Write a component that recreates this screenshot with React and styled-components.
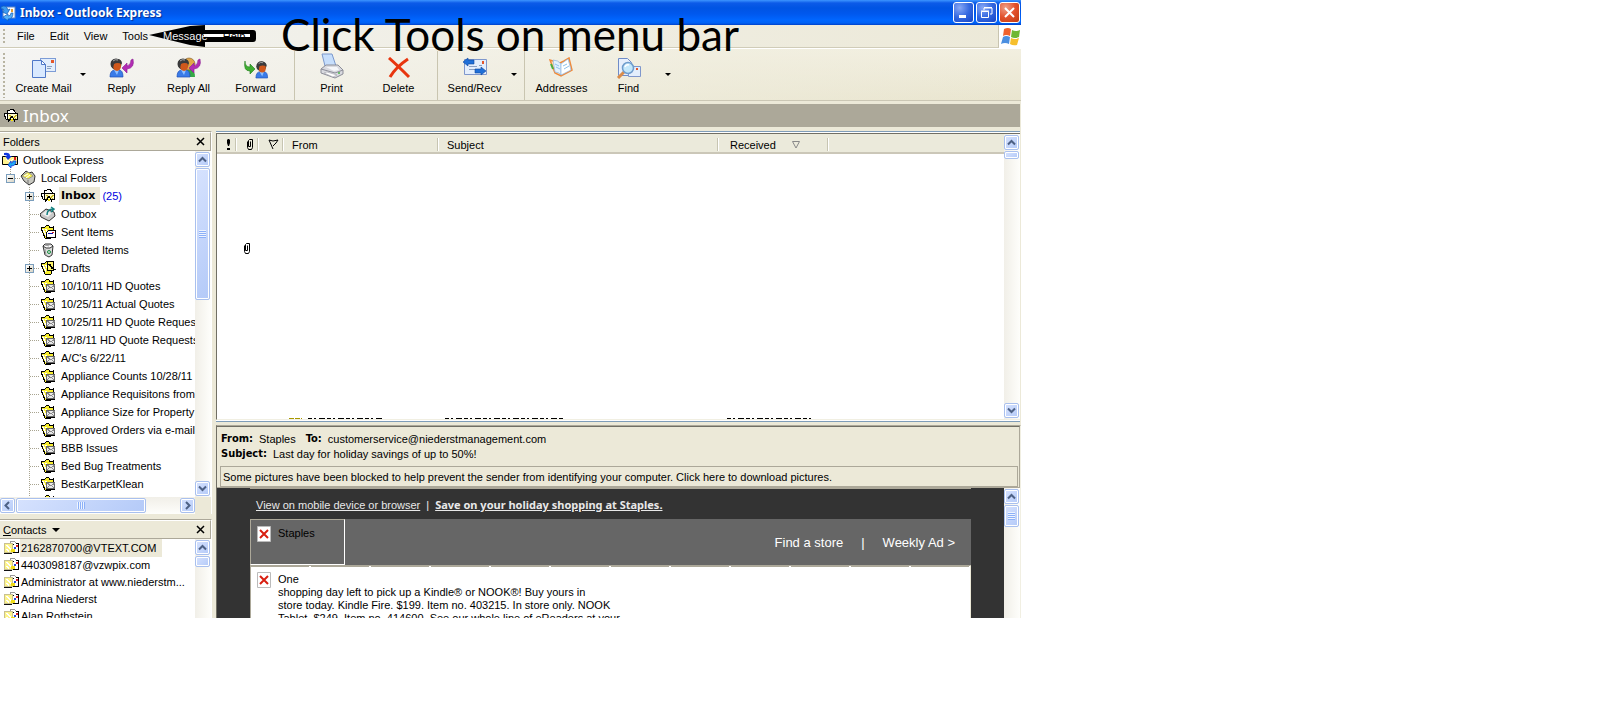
import React from 'react';
import styled, { createGlobalStyle, css } from 'styled-components';

const face = '#ece9d8';
const shade = '#aca899';
const ui = '"Liberation Sans", sans-serif';

const GlobalStyle = createGlobalStyle`
  * { box-sizing: border-box; }
  body { margin: 0; background: #fff; font: 11px/14px ${ui}; color: #000; }
  button { font: inherit; color: inherit; border: 0; padding: 0; margin: 0; background: none; white-space: nowrap; }
  svg { display: block; flex: none; }
  ul { list-style: none; margin: 0; padding: 0; }
`;

const Desktop = styled.div`height: 100vh; padding-bottom: 95px; overflow: hidden;`;
const Window = styled.main`
  position: relative;
  width: calc(100% - 579px);
  height: 100%;
  display: flex;
  flex-direction: column;
  overflow: hidden;
  background: ${face};
`;

/* Title bar */
const TitleBar = styled.header`
  display: flex;
  align-items: center;
  flex: none;
  height: 25px;
  padding-right: 1px;
  background: linear-gradient(#3d95ff 0, #0c5be8 3px, #0054e3 8px, #0058ee 14px, #0066ff 20px, #0062f5 23px, #0040c8 25px);
`;
const Title = styled.h1`
  flex: 1;
  margin: 0 0 0 4px;
  color: #fff;
  font: bold 12px/20px "Noto Sans", sans-serif;
  text-shadow: 1px 1px 1px #0a2f8f;
`;
const CaptionButtons = styled.div`display: flex; gap: 2px;`;
const CaptionButton = styled.button`
  display: grid;
  place-items: center;
  width: 21px;
  height: 21px;
  border: 1px solid #fff;
  border-radius: 3px;
  background: ${p => p.$close
    ? 'radial-gradient(circle at 30% 25%, #f0a088, #e2512c 50%, #c03a10)'
    : 'radial-gradient(circle at 30% 25%, #88a8f5, #3468e0 50%, #1644c4)'};
`;

/* Menu bar */
const MenuBar = styled.nav`
  display: flex;
  align-items: stretch;
  flex: none;
  height: 24px;
  background: linear-gradient(90deg, #f3f3f1, #efede1 60%, ${face});
  border-bottom: 1px solid #fff;
`;
const MenuItems = styled.div`
  flex: 1;
  display: flex;
  align-items: center;
  padding-left: 3px;
  border-bottom: 1px solid #d0ccb8;
  border-right: 1px solid #c8c4b0;
`;
const Grip = styled.span`
  width: 2px;
  align-self: stretch;
  margin: ${p => p.$tall ? '4px 0 2px' : '4px 0'};
  background: repeating-linear-gradient(#b8b4a2 0 2px, transparent 2px 4px);
`;
const MenuList = styled.div`display: flex; gap: 15px; margin-left: 12px;`;
const MenuItem = styled.button`
  position: relative;
  z-index: 2;
  color: ${p => p.$light ? '#f4f4f4' : '#000'};
  line-height: 14px;
`;
const Flag = styled.div`
  width: 22px;
  display: grid;
  place-items: center;
  background: #fff;
`;

/* Tool bar */
const ToolBar = styled.div`
  display: flex;
  align-items: stretch;
  flex: none;
  height: 52px;
  padding-left: 3px;
  background: linear-gradient(90deg, rgba(245,245,245,.9), rgba(240,238,224,.5) 70%, transparent), linear-gradient(#f2efe0, #e9e5cf);
  border-bottom: 1px solid #cbc7b5;
`;
const ToolButton = styled.button`
  width: 67px;
  display: flex;
  flex-direction: column;
  align-items: center;
  gap: 2px;
  padding-top: 8px;
  line-height: 14px;
`;
const DropButton = styled.button`
  width: 11px;
  display: grid;
  place-items: center;
`;
const Caret = styled.span`
  border: ${p => p.$big ? 4 : 3}px solid transparent;
  border-top-color: #000;
  border-bottom: 0;
`;
const Rule = styled.span`width: 1px; margin: 2px 3px 0 5px; background: #c9c5b0;`;
const ToolSpace = styled.span`width: 5px;`;

const ViewBar = styled.div`
  display: flex;
  align-items: center;
  gap: 4px;
  flex: none;
  height: 23px;
  margin: 3px 1px 4px 0;
  padding-left: 3px;
  background: ${shade};
`;
const ViewTitle = styled.h2`
  margin: 0;
  color: #fff;
  font: 17px/22px "Noto Sans", sans-serif;
`;

/* Panes */
const Panes = styled.div`flex: 1; min-height: 0; display: flex; gap: 4px;`;
const Side = styled.aside`width: 212px; flex: none; display: flex; flex-direction: column; gap: 5px;`;
const Panel = styled.section`
  display: flex;
  flex-direction: column;
  min-height: 0;
  border-top: 1px solid ${shade};
  border-right: 1px solid #fff;
  ${p => p.$grow ? css`flex: 1;` : css`flex: 0 0 99px;`}
`;
const PanelHead = styled.div`
  display: flex;
  align-items: center;
  justify-content: space-between;
  flex: none;
  height: 19px;
  padding: 0 5px 0 3px;
  border-top: 1px solid #fff;
  border-bottom: 1px solid ${shade};
  border-right: 1px solid ${shade};
`;
const PanelTitle = styled.h3`margin: 0; font: inherit; display: flex; align-items: center; gap: 6px;`;
const PanelBody = styled.div`flex: 1; min-height: 0; display: flex; overflow: hidden; background: #fff;`;
const Clip = styled.div`flex: 1; min-width: 0; overflow: hidden;`;

const Row = styled.li`
  display: flex;
  align-items: center;
  height: 18px;
  padding-left: ${p => p.$depth ? (p.$depth === 1 ? 0 : 20) : 2}px;
  white-space: nowrap;
`;
const Branch = styled.span`
  display: grid;
  place-items: center start;
  width: 20px;
  height: 18px;
  > * { grid-area: 1 / 1; }
`;
const Expander = styled.button`
  display: grid;
  place-items: center;
  width: 9px;
  height: 9px;
  margin-left: ${p => p.$root ? 6 : 5}px;
  border: 1px solid #7b9ebd;
  background: linear-gradient(135deg, #fff, #d8d4c4);
`;
const RowLabel = styled.span`
  margin-left: 3px;
  padding: 2px ${p => p.$selected ? 5 : 2}px 2px 2px;
  ${p => p.$selected && css`background: ${face}; font: bold 11px/14px "DejaVu Sans", sans-serif;`}
`;
const Unread = styled.span`color: #0000e0; margin-left: 2px;`;

const Contact = styled.li`
  display: flex;
  align-items: center;
  height: 17px;
  padding-left: 4px;
  white-space: nowrap;
`;
const ContactName = styled.span`
  padding: 2px ${p => p.$selected ? 6 : 0}px 2px 1px;
  background: ${p => p.$selected ? face : 'none'};
`;

/* Scroll bars */
const ScrollTrack = styled.div`
  display: flex;
  flex: none;
  background: linear-gradient(${p => p.$flat ? '180deg' : '90deg'}, #f1efe8, #fefefb);
  ${p => p.$flat
    ? css`height: 17px; margin-right: 16px; padding: 1px 0;`
    : css`width: 16px; flex-direction: column; padding: 1px 1px 1px 0;`}
`;
const scrollFace = css`
  display: grid;
  place-items: center;
  flex: none;
  border: 1px solid #fff;
  border-radius: 2px;
  outline: 1px solid #a9c0ee;
  outline-offset: -1px;
  box-shadow: inset 0 0 0 1px #fff;
  background: linear-gradient(135deg, #d6e2fe, #b4caf8);
`;
const ScrollButton = styled.button`
  ${scrollFace}
  width: 15px;
  height: 15px;
`;
const ScrollThumb = styled.div`
  ${scrollFace}
  ${p => p.$flat ? css`width: ${p.$size}px; margin-left: 1px;` : css`height: ${p.$size}px; margin-top: 1px;`}
`;
const Ridges = styled.span`
  width: ${p => p.$flat ? 8 : 7}px;
  height: ${p => p.$flat ? 7 : 8}px;
  background: repeating-linear-gradient(${p => p.$flat ? '90deg' : '180deg'}, #eef4fe 0 1px, #8cb0f8 1px 2px);
`;
const Fill = styled.span`flex: 1;`;

/* Message list */
const Main = styled.div`flex: 1; min-width: 0; display: flex; flex-direction: column; gap: 3px;`;
const ListPane = styled.section`
  flex: 1;
  min-height: 0;
  display: flex;
  overflow: hidden;
  margin-right: 1px;
  border-top: 1px solid #7f9db9;
  border-bottom: 1px solid #7f9db9;
  background: #fff;
`;
const ListFrame = styled.div`
  flex: 1;
  display: flex;
  margin: 1px 0;
  border-top: 1px solid #716f64;
  border-left: 1px solid #716f64;
  border-bottom: 1px solid #f1efe2;
`;
const TableWrap = styled.div`
  flex: 1;
  display: flex;
  flex-direction: column;
  justify-content: space-between;
  overflow: hidden;
`;
const MailTable = styled.table`
  width: 100%;
  table-layout: fixed;
  border-collapse: collapse;
`;
const HeadCell = styled.th`
  width: ${p => p.$w ? p.$w + 'px' : 'auto'};
  height: 20px;
  padding: 1px 0 0 ${p => p.$pad || 0}px;
  box-shadow: inset 0 -2px #cbc7b8;
  background:
    linear-gradient(#fff, #fff) right 0 center / 1px 13px no-repeat,
    linear-gradient(#c7c5b2, #c7c5b2) right 1px center / 1px 13px no-repeat,
    #ebeadb;
  ${p => !p.$w && css`background: #ebeadb;`}
  font-weight: 400;
  text-align: left;
`;
const SortLabel = styled.span`display: flex; align-items: center; gap: 16px;`;
const Cell = styled.td`height: 188px; padding: 0 0 0 6px;`;

/* Preview */
const Preview = styled.section`
  flex: 0 0 193px;
  display: flex;
  flex-direction: column;
  overflow: hidden;
  border-top: 1px solid ${shade};
  border-left: 1px solid #716f64;
  border-right: 1px solid #f1efe2;
`;
const MailHead = styled.div`
  flex: none;
  padding: 5px 1px 0 3px;
  border-top: 1px solid #716f64;
  border-right: 1px solid ${shade};
  border-bottom: 1px solid ${shade};
  height: 62px;
`;
const HeadLine = styled.div`display: flex; gap: 6px; height: 15px; line-height: 14px; padding-left: 1px;`;
const Name = styled.b`font: bold 11px/14px "DejaVu Sans Condensed", sans-serif;`;
const Value = styled.span`margin-right: 4px;`;
const InfoBar = styled.button`
  display: block;
  width: 100%;
  height: 21px;
  margin-top: 4px;
  padding-left: 2px;
  border: 1px solid ${shade};
  text-align: left;
`;
const MailBody = styled.div`flex: 1; min-height: 0; display: flex;`;
const Canvas = styled.div`
  flex: 1;
  min-width: 0;
  overflow: hidden;
  padding: 0 33px;
  background: #333;
`;
const TopLinks = styled.p`
  margin: 0;
  height: 31px;
  padding: 9px 0 0 6px;
  border-top: 1px solid ${shade};
  color: #e8e8e8;
  white-space: nowrap;
`;
const TopLink = styled.a`
  color: inherit;
  ${p => p.$strong && css`font-family: "Noto Sans", sans-serif; font-weight: 700;`}
`;
const Bar = styled.span`margin: 0 6px;`;
const Banner = styled.div`
  display: flex;
  justify-content: space-between;
  height: 46px;
  background: #666;
`;
const Logo = styled.div`
  display: flex;
  gap: 7px;
  width: 95px;
  padding: 6px;
  border: 1px solid ${shade};
  border-right-color: #fff;
  border-bottom-color: #fff;
`;
const BannerNav = styled.nav`
  display: flex;
  align-items: center;
  gap: 18px;
  padding: 1px 16px 0 0;
  color: #fff;
  font-size: 13px;
`;
const BannerLink = styled.a`color: inherit; text-decoration: none;`;
const Offer = styled.article`
  display: flex;
  gap: 7px;
  height: 90px;
  padding: 6px 6px;
  border-left: 1px solid ${shade};
  border-right: 1px solid ${face};
  border-top: 1px solid ${shade};
  background: repeating-linear-gradient(90deg, ${shade} 0 58px, #fff 58px 60px) top / 100% 1px no-repeat, #fff;
`;
const OfferText = styled.p`margin: 1px 0 0; line-height: 13px; white-space: nowrap;`;

/* Annotation */
const Note = styled.div`
  position: absolute;
  z-index: 3;
  left: 281px;
  top: 8px;
  font: 44px/52px Lato, sans-serif;
  white-space: nowrap;
  pointer-events: none;
`;
const ArrowMark = styled.svg`
  position: absolute;
  z-index: 1;
  left: 148px;
  top: 24px;
  pointer-events: none;
`;

/* Icons */
const AppIcon = () => (
  <svg width="16" height="18" viewBox="0 0 16 18">
    <rect x="3" y="3" width="12" height="11" fill="#fff" stroke="#5d86c8" />
    <path d="M11 5h2v3h-2z" fill="#e59d30" />
    <path d="M1 3q5-3 7 3l2-1-3 5-5-2 2-1Q4 4 1 5z" fill="#3d9bf0" stroke="#125cb8" strokeWidth=".7" />
    <path d="M13 9q0 6-5 6v2l-5-4 5-3v2q3 0 3-3z" fill="#55b1fa" stroke="#125cb8" strokeWidth=".7" />
  </svg>
);
const WindowsFlag = () => (
  <svg width="19" height="19" viewBox="0 0 19 19">
    <path d="M3 2q4-2 7 0L9 9q-4-2-7 0z" fill="#f0622c" />
    <path d="M11 3q4 2 8 0l-1 7q-4 2-8 0z" fill="#6fb834" />
    <path d="M2 10q3-2 7 0l-1 7q-4-2-8 0z" fill="#4b8fe0" />
    <path d="M10 11q4 2 8 0l-2 7q-4 1-7-1z" fill="#f6bf2c" />
  </svg>
);
const CreateIcon = () => (
  <svg width="26" height="22" viewBox="0 0 26 22">
    <rect x="9.500" y="1.500" width="15" height="13" fill="#e3eefc" stroke="#7d9cd6" />
    <path d="M20 3h3v3h-3z" fill="#e4572a" /><path d="M16 9.500h5M16 11.500h4" stroke="#8aa0c0" />
    <path d="M1.500 3.500h9l4 4v13h-13z" fill="#d9e9ff" stroke="#4f78c8" />
    <path d="M10.500 3.500v4h4z" fill="#fff" stroke="#4f78c8" />
  </svg>
);
const Person = () => (
  <g>
    <path d="M1 20q0-7 5-7h4q4 0 4 7z" fill="#3a7be8" stroke="#1c4fb8" strokeWidth=".7" />
    <path d="M5 13l3 5 2-5z" fill="#8fc0ff" />
    <circle cx="7" cy="7" r="5.500" fill="#333" />
    <ellipse cx="8" cy="9" rx="4" ry="5" fill="#d0581c" />
    <path d="M2 9q0-8 6-7 5 0 5 5-5-2-8 0l-1 4z" fill="#3b3b3d" />
    <path d="M4 4q2-2 5-1" stroke="#a8a8a8" fill="none" />
  </g>
);
const Swoop = () => <path d="M24 2q2 9-6 10v4l-5-5 5-5v3q4-1 4-6z" fill="#b22cb4" stroke="#8a1c90" strokeWidth=".6" />;
const ReplyIcon = () => <svg width="26" height="22" viewBox="0 0 26 22"><Person /><Swoop /></svg>;
const ReplyAllIcon = () => (
  <svg width="26" height="22" viewBox="0 0 26 22">
    <path d="M9 20q0-8 5-8 5 1 5 8z" fill="#35a845" /><circle cx="13" cy="7" r="6" fill="#e0a548" stroke="#7a5520" strokeWidth=".6" />
    <Person /><Swoop />
  </svg>
);
const ForwardIcon = () => (
  <svg width="26" height="22" viewBox="0 0 26 22">
    <path d="M2 4q0 6 5 6V7l5 5-5 5v-3Q0 14 2 4z" fill="#3fae32" stroke="#1d7a18" strokeWidth=".6" />
    <g transform="translate(12 3) scale(.9)"><Person /></g>
  </svg>
);
const PrintIcon = () => (
  <svg width="26" height="22" viewBox="0 2 26 22" overflow="visible">
    <path d="M3 -1h10l4 12H6z" fill="#c6defc" stroke="#7b98cc" />
    <path d="M2 14l5-4h12l5 5v4l-8 4-14-5z" fill="#d9dae0" stroke="#8c8d98" />
    <path d="M2 14l14 4 8-3" fill="none" stroke="#8c8d98" /><path d="M7 12h11l2 3-5 1z" fill="#f6f7fa" />
    <path d="M5 18l9 4 4-2-10-3z" fill="#fff" stroke="#a0a0a8" strokeWidth=".6" /><circle cx="20" cy="18" r="1" fill="#4bb34b" />
  </svg>
);
const DeleteIcon = () => (
  <svg width="26" height="22" viewBox="0 0 26 22">
    <path d="M3 1q9 8 20 19M22 2Q10 10 4 20" fill="none" stroke="#e8350e" strokeWidth="3" />
  </svg>
);
const SendIcon = () => (
  <svg width="26" height="22" viewBox="0 0 26 22">
    <path d="M2.500 2.500h22v15h-22z" fill="#e4eefc" stroke="#7f97cc" />
    <path d="M20 4h2v3h-2z" fill="#e4572a" /><path d="M7 9.500h8M7 12.500h6M17 8.500h3" stroke="#8ba0c4" />
    <path d="M1 5l5-4v2h6v4H6v2z" fill="#1f6fd8" stroke="#0d469e" strokeWidth=".6" />
    <path d="M24 14l-5-4v2h-6v4h6v2z" fill="#1f6fd8" stroke="#0d469e" strokeWidth=".6" />
  </svg>
);
const AddressIcon = () => (
  <svg width="26" height="22" viewBox="0 0 26 22">
    <path d="M1 3l5 13 6 3 11-6-3-12-5 3-4 2z" fill="#fbe1b8" stroke="#ef8a3c" strokeWidth="1.500" />
    <path d="M4 3q5 0 8 4v11q-2-3-6-3z" fill="#e3f1fd" stroke="#8db4e0" strokeWidth=".7" />
    <path d="M12 7l7-5 3 11-10 5z" fill="#fff" stroke="#8db4e0" strokeWidth=".7" />
    <path d="M6 7l4 2M7 10l4 2M14 9l4-2M15 12l5-3" stroke="#8cc0ea" /><path d="M2 7l2 5" stroke="#4bae3e" strokeWidth="2" />
  </svg>
);
const FindIcon = () => (
  <svg width="26" height="22" viewBox="0 0 26 22">
    <path d="M2.500 1.500h9l4 4v13h-13z" fill="#e6effc" stroke="#6f8cc8" />
    <path d="M12.500 9.500h12v10h-12z" fill="#e3eefc" stroke="#7f97cc" /><path d="M20 11h2v2h-2z" fill="#e4572a" />
    <path d="M8 15l-6 6" stroke="#d98c4a" strokeWidth="3" />
    <circle cx="12" cy="11" r="5.500" fill="#c4e8fb" stroke="#6f9ccc" strokeWidth="1.500" />
    <path d="M9 10q1-3 4-2" stroke="#fff" fill="none" strokeWidth="1.500" />
  </svg>
);
const InboxIcon = () => (
  <svg width="16" height="16" viewBox="0 0 16 16" shapeRendering="crispEdges">
    <path d="M1 6l3-1V2h3l3-1 2 3v2H5l1 6-3-1z" fill="#fff" stroke="#000" />
    <path d="M4.500 5.500h10v6h-10z" fill="#fffbc8" stroke="#000" />
    <path d="M6 7l4 3 4-3M6 11l2-2M13 11l-2-2" fill="none" stroke="#c8b820" />
    <path d="M5 14l4-6 3 6" fill="none" stroke="#000" /><path d="M8 11h2v2H8z" fill="#f4e400" />
  </svg>
);
const FolderIcon = ({ kind }) => (
  <svg width="16" height="16" viewBox="0 0 16 16" shapeRendering="crispEdges">
    <path d="M1 4l4-1 2-2 2 1 1 2 3-1v3l-2 8H5z" fill="#f8ee30" stroke="#000" />
    <path d="M2 5h1v2h1v2h1v2h1M5 5h1v2h1v1" stroke="#fff" fill="none" />
    {kind === 'drafts'
      ? <><path d="M7.500 1.500h6v9h-6z" fill="#fff36a" stroke="#000" /><path d="M9 4l4 5" stroke="#000" strokeWidth="2" /><path d="M14 9h2" stroke="#000" /></>
      : kind === 'sent'
        ? <><path d="M6 9l3-3h6v7H6z" fill="#fff" stroke="#000" /><path d="M8 9.500h5" stroke="#1212b0" /><path d="M12 8h2" stroke="#e02020" /></>
        : <><path d="M6.500 6.500h8v6h-8z" fill="#e8e8e8" stroke="#666" /><path d="M7 7l4 3 4-3M7 12l2-2M14 12l-2-2" fill="none" stroke="#888" /><path d="M6 13.500h9" stroke="#000" /></>}
  </svg>
);
const OutboxIcon = () => (
  <svg width="16" height="16" viewBox="0 0 16 16">
    <path d="M0 8l6-5 8 3 1 4-6 5-8-4z" fill="#c9c9c9" stroke="#333" /><path d="M2 8l4-3 6 2-4 4z" fill="#eee" />
    <path d="M7 9q0-6 6-6M11 1l3 2-3 3" fill="none" stroke="#138080" strokeWidth="1.500" />
  </svg>
);
const TrashIcon = () => (
  <svg width="16" height="16" viewBox="0 0 16 16">
    <path d="M3 4l2-2h6l2 2-1 9-3 2-4-2z" fill="#ddd" stroke="#333" /><path d="M3 4l3 2h4l3-2" fill="#fff" stroke="#333" />
    <path d="M5 7l1 7M5 3l4 1" stroke="#999" /><circle cx="9" cy="10" r="1.500" fill="none" stroke="#159040" />
  </svg>
);
const RootIcon = () => (
  <svg width="16" height="16" viewBox="0 0 16 16">
    <path d="M.5 4.500h15v8H.5z" fill="#fff490" stroke="#000" /><path d="M12 5h2v3h-2z" fill="#e02020" /><path d="M4 7l4 3 3-3" stroke="#fff" fill="none" />
    <path d="M2 1q6-1 6 3l2 0-4 4-3-4h2Q5 3 2 3z" fill="#1238e0" />
    <path d="M14 9q0 5-5 5v2l-3-3 3-4v2q2 0 2-2z" fill="#20a8f0" stroke="#1238e0" strokeWidth=".8" />
  </svg>
);
const LocalIcon = () => (
  <svg width="16" height="16" viewBox="0 0 16 16">
    <path d="M1 6l3-3 2-2 3 2 3-1 3 4-1 6-5 3-5-4z" fill="#c8c8c0" stroke="#333" />
    <path d="M2 6l6-4 5 4-5 3z" fill="#f5ee50" stroke="#777" strokeWidth=".6" /><path d="M4 6l4-2M6 8l4-3" stroke="#fff" /><path d="M8 10v4" stroke="#777" />
  </svg>
);
const CardIcon = () => (
  <svg width="16" height="15" viewBox="0 0 16 15" shapeRendering="crispEdges">
    <path d="M6 4V2l2-1h2l3 3" fill="#fff" stroke="#999" />
    <path d="M.5 3.500h8v9h-8z" fill="#fdf48a" stroke="#c8c090" /><path d="M2 5h1v1h1v1h1v1h1v1h1M2 9h1v1h1v1h1" stroke="#fff" fill="none" />
    <path d="M0 13h8" stroke="#111" /><path d="M9 4h5v8H9z" fill="#fff" /><path d="M9 4.500h1M12 3.500h2.500v9H9.500V9" fill="none" stroke="#000" />
    <path d="M7 9h4v3H7z" fill="#f0dc18" /><path d="M10 7h2v2h-2z" fill="#2448d8" /><path d="M12 5h2v2h-2z" fill="#e02020" />
  </svg>
);
const ClipIcon = () => (
  <svg width="8" height="13" viewBox="0 0 8 13">
    <path d="M1.500 3.500v6l1 2h3l1-2v-8h-3l-1 1v6h2v-5" fill="none" stroke="#000" />
  </svg>
);
const Chevron = ({ to }) => (
  <svg width="9" height="9" viewBox="0 0 9 9">
    <path d={{ up: 'M1 6.500l3.500-3.500L8 6.500', down: 'M1 2.500L4.500 6 8 2.500', left: 'M6 1L2.500 4.500 6 8', right: 'M3 1l3.500 3.500L3 8' }[to]} fill="none" stroke="#4d6185" strokeWidth="2" />
  </svg>
);
const CrossIcon = () => <svg width="9" height="9" viewBox="0 0 9 9"><path d="M1 1l7 7M8 1L1 8" stroke="#000" strokeWidth="1.500" /></svg>;
const BrokenImage = () => (
  <svg width="14" height="16" viewBox="0 0 14 16">
    <path d="M.5.5h13v15H.5z" fill="#fff" stroke="#bbb" /><path d="M3 4l8 8M11 4l-8 8" stroke="#d81e10" strokeWidth="2" />
  </svg>
);
const Connector = ({ root }) => (
  <svg width="20" height="18">
    <path d={root ? 'M10.500 0v9M11 9.500h9' : 'M9.500 0v18M10 9.500h10'} stroke="#a8a490" strokeDasharray="1 1" />
  </svg>
);

const folders = [
  ['Inbox', 'inbox', '+'], ['Outbox', 'outbox'], ['Sent Items', 'sent'], ['Deleted Items', 'trash'], ['Drafts', 'drafts', '+'],
  ['10/10/11 HD Quotes'], ['10/25/11 Actual Quotes'], ['10/25/11 HD Quote Requests'], ['12/8/11 HD Quote Requests'],
  ["A/C's 6/22/11"], ['Appliance Counts 10/28/11'], ['Appliance Requisitons from A'], ['Appliance Size for Property'],
  ['Approved Orders via e-mail'], ['BBB Issues'], ['Bed Bug Treatments'], ['BestKarpetKlean'], [''],
];
const iconFor = { inbox: InboxIcon, outbox: OutboxIcon, trash: TrashIcon };
const contacts = ['2162870700@VTEXT.COM', '4403098187@vzwpix.com', 'Administrator at www.niederstm...', 'Adrina Niederst', 'Alan Rothstein'];

function VScroll({ thumb, ridges, down = true }) {
  return (
    <ScrollTrack>
      <ScrollButton aria-label="Scroll up"><Chevron to="up" /></ScrollButton>
      <ScrollThumb $size={thumb}>{ridges && <Ridges />}</ScrollThumb>
      <Fill />
      {down && <ScrollButton aria-label="Scroll down"><Chevron to="down" /></ScrollButton>}
    </ScrollTrack>
  );
}

function Tool({ icon: Icon, label }) {
  return <ToolButton><Icon />{label}</ToolButton>;
}

function FolderRow({ name, kind, mark }) {
  const Icon = iconFor[kind] || FolderIcon;
  const selected = kind === 'inbox';
  return (
    <Row $depth={2}>
      <Branch>
        <Connector />
        {mark && <Expander aria-label={`Expand ${name}`}><svg width="5" height="5"><path d="M0 2.500h5M2.500 0v5" stroke="#000" /></svg></Expander>}
      </Branch>
      <Icon kind={kind} />
      {name && <RowLabel $selected={selected}>{name}</RowLabel>}
      {selected && <Unread>(25)</Unread>}
    </Row>
  );
}

export default function App() {
  return (
    <Desktop>
      <GlobalStyle />
      <Window>
        <TitleBar>
          <AppIcon />
          <Title>Inbox - Outlook Express</Title>
          <CaptionButtons>
            <CaptionButton aria-label="Minimize"><svg width="13" height="13"><path d="M2 10.500h7" stroke="#fff" strokeWidth="3" /></svg></CaptionButton>
            <CaptionButton aria-label="Restore"><svg width="13" height="13"><path d="M4 4V2h8v6h-2M4 1.500h8M1.500 5.500h7v6h-7zM1 5h8" fill="none" stroke="#fff" /></svg></CaptionButton>
            <CaptionButton $close aria-label="Close"><svg width="13" height="13"><path d="M2 2l9 9M11 2l-9 9" stroke="#fff" strokeWidth="2" /></svg></CaptionButton>
          </CaptionButtons>
        </TitleBar>

        <MenuBar>
          <MenuItems>
            <Grip />
            <MenuList>
              <MenuItem>File</MenuItem>
              <MenuItem>Edit</MenuItem>
              <MenuItem>View</MenuItem>
              <MenuItem>Tools</MenuItem>
              <MenuItem $light>Message</MenuItem>
              <MenuItem>Help</MenuItem>
            </MenuList>
          </MenuItems>
          <Flag><WindowsFlag /></Flag>
        </MenuBar>

        <ToolBar>
          <Grip $tall />
          <ToolSpace />
          <Tool icon={CreateIcon} label="Create Mail" />
          <DropButton aria-label="Create Mail options"><Caret /></DropButton>
          <Tool icon={ReplyIcon} label="Reply" />
          <Tool icon={ReplyAllIcon} label="Reply All" />
          <Tool icon={ForwardIcon} label="Forward" />
          <Rule />
          <Tool icon={PrintIcon} label="Print" />
          <Tool icon={DeleteIcon} label="Delete" />
          <Rule />
          <Tool icon={SendIcon} label="Send/Recv" />
          <DropButton aria-label="Send and receive options"><Caret /></DropButton>
          <Rule />
          <Tool icon={AddressIcon} label="Addresses" />
          <Tool icon={FindIcon} label="Find" />
          <DropButton aria-label="Find options"><Caret /></DropButton>
        </ToolBar>

        <ViewBar><InboxIcon /><ViewTitle>Inbox</ViewTitle></ViewBar>

        <Panes>
          <Side>
            <Panel $grow>
              <PanelHead><PanelTitle>Folders</PanelTitle><button aria-label="Close folders"><CrossIcon /></button></PanelHead>
              <PanelBody>
                <Clip>
                  <ul>
                    <Row><RootIcon /><RowLabel>Outlook Express</RowLabel></Row>
                    <Row $depth={1}>
                      <Branch><Connector root /><Expander $root aria-label="Collapse Local Folders"><svg width="5" height="5"><path d="M0 2.500h5" stroke="#000" /></svg></Expander></Branch>
                      <LocalIcon /><RowLabel>Local Folders</RowLabel>
                    </Row>
                    {folders.map(([name, kind, mark]) => <FolderRow key={name} name={name} kind={kind} mark={mark} />)}
                  </ul>
                </Clip>
                <VScroll thumb={132} ridges />
              </PanelBody>
              <ScrollTrack $flat>
                <ScrollButton aria-label="Scroll left"><Chevron to="left" /></ScrollButton>
                <ScrollThumb $flat $size={130}><Ridges $flat /></ScrollThumb>
                <Fill />
                <ScrollButton aria-label="Scroll right"><Chevron to="right" /></ScrollButton>
              </ScrollTrack>
            </Panel>
            <Panel>
              <PanelHead><PanelTitle><span><u>C</u>ontacts</span><Caret $big /></PanelTitle><button aria-label="Close contacts"><CrossIcon /></button></PanelHead>
              <PanelBody>
                <Clip>
                  <ul>
                    {contacts.map((name, i) => <Contact key={name}><CardIcon /><ContactName $selected={i === 0}>{name}</ContactName></Contact>)}
                  </ul>
                </Clip>
                <VScroll thumb={11} down={false} />
              </PanelBody>
            </Panel>
          </Side>

          <Main>
            <ListPane>
              <ListFrame>
                <TableWrap>
                  <MailTable>
                    <thead>
                      <tr>
                        <HeadCell $w={20} $pad={9} aria-label="Priority"><svg width="5" height="11"><path d="M1 1l1-1h1l1 1v3L3 7H2L1 4zM1 9h3v2H1z" /></svg></HeadCell>
                        <HeadCell $w={22} $pad={9} aria-label="Attachment"><ClipIcon /></HeadCell>
                        <HeadCell $w={25} $pad={9} aria-label="Flag"><svg width="11" height="11" viewBox="0 0 11 11"><path d="M1 1l4 9M1 1l4 1 5-1-2 3-3 3" fill="none" stroke="#000" /></svg></HeadCell>
                        <HeadCell $w={155} $pad={8}>From</HeadCell>
                        <HeadCell $w={280} $pad={8}>Subject</HeadCell>
                        <HeadCell $w={110} $pad={11}><SortLabel>Received<svg width="8" height="8"><path d="M7.500.5L4 7 .5.5z" fill="none" stroke="#888" /></svg></SortLabel></HeadCell>
                        <HeadCell />
                      </tr>
                    </thead>
                    <tbody>
                      <tr><Cell /><Cell><ClipIcon /></Cell><Cell /><Cell /><Cell /><Cell /><Cell /></tr>
                    </tbody>
                  </MailTable>
                  <svg width="620" height="1" aria-hidden="true">
                    <path d="M72 .5h13" stroke="#a89800" strokeDasharray="5 1" />
                    <path d="M91 .5h75M228 .5h119M510 .5h86" stroke="#000" strokeDasharray="4 2 2 3 6 2" />
                  </svg>
                </TableWrap>
                <VScroll thumb={8} />
              </ListFrame>
            </ListPane>

            <Preview>
              <MailHead>
                <HeadLine><Name>From:</Name><Value>Staples</Value><Name>To:</Name><Value>customerservice@niederstmanagement.com</Value></HeadLine>
                <HeadLine><Name>Subject:</Name><Value>Last day for holiday savings of up to 50%!</Value></HeadLine>
                <InfoBar>Some pictures have been blocked to help prevent the sender from identifying your computer. Click here to download pictures.</InfoBar>
              </MailHead>
              <MailBody>
                <Canvas>
                  <TopLinks>
                    <TopLink href="#browser">View on mobile device or browser</TopLink><Bar>|</Bar>
                    <TopLink href="#shop" $strong>Save on your holiday shopping at Staples.</TopLink>
                  </TopLinks>
                  <Banner>
                    <Logo><BrokenImage />Staples</Logo>
                    <BannerNav>
                      <BannerLink href="#store">Find a store</BannerLink><span>|</span><BannerLink href="#ad">Weekly Ad &gt;</BannerLink>
                    </BannerNav>
                  </Banner>
                  <Offer>
                    <BrokenImage />
                    <OfferText>
                      One<br />shopping day left to pick up a Kindle® or NOOK®! Buy yours in<br />
                      store today. Kindle Fire. $199. Item no. 403215. In store only. NOOK<br />
                      Tablet. $249. Item no. 414600. See our whole line of eReaders at your
                    </OfferText>
                  </Offer>
                </Canvas>
                <VScroll thumb={22} ridges down={false} />
              </MailBody>
            </Preview>
          </Main>
        </Panes>

        <ArrowMark width="110" height="24" viewBox="0 0 110 24">
          <path d="M1 11L42 2l15-1v5h48q3 0 3 3v6q0 3-3 3H57v5l-15-2z" fill="#000" />
          <path d="M56 10h46v3H56z" fill="#fff" />
        </ArrowMark>
        <Note>Click Tools on menu bar</Note>
      </Window>
    </Desktop>
  );
}
